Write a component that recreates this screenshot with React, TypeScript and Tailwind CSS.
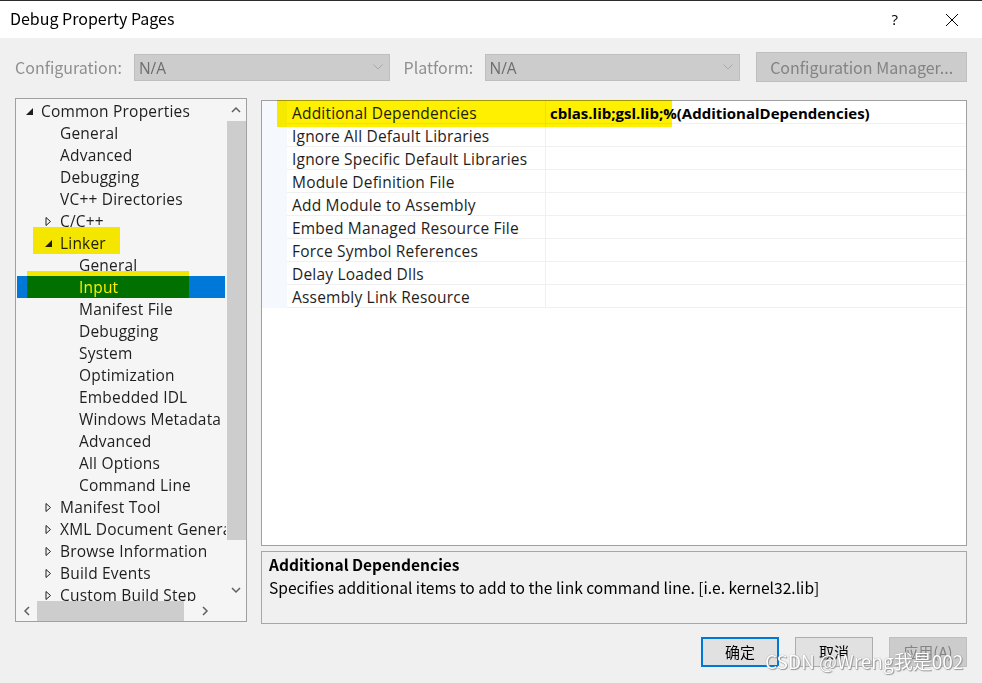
import React from "react";

const seg = "font-['Open_Sans','Noto_Sans',sans-serif]";
const yh = "font-['Noto_Sans_CJK_SC','Noto_Sans',sans-serif]";

type Node = { label: string; level: number; exp?: "open" | "closed"; selected?: boolean };

const tree: Node[] = [
  { label: "Common Properties", level: 0, exp: "open" },
  { label: "General", level: 1 },
  { label: "Advanced", level: 1 },
  { label: "Debugging", level: 1 },
  { label: "VC++ Directories", level: 1 },
  { label: "C/C++", level: 1, exp: "closed" },
  { label: "Linker", level: 1, exp: "open" },
  { label: "General", level: 2 },
  { label: "Input", level: 2, selected: true },
  { label: "Manifest File", level: 2 },
  { label: "Debugging", level: 2 },
  { label: "System", level: 2 },
  { label: "Optimization", level: 2 },
  { label: "Embedded IDL", level: 2 },
  { label: "Windows Metadata", level: 2 },
  { label: "Advanced", level: 2 },
  { label: "All Options", level: 2 },
  { label: "Command Line", level: 2 },
  { label: "Manifest Tool", level: 1, exp: "closed" },
  { label: "XML Document Generator", level: 1, exp: "closed" },
  { label: "Browse Information", level: 1, exp: "closed" },
  { label: "Build Events", level: 1, exp: "closed" },
  { label: "Custom Build Step", level: 1, exp: "closed" },
];

const props = [
  "Additional Dependencies",
  "Ignore All Default Libraries",
  "Ignore Specific Default Libraries",
  "Module Definition File",
  "Add Module to Assembly",
  "Embed Managed Resource File",
  "Force Symbol References",
  "Delay Loaded Dlls",
  "Assembly Link Resource",
];

function Expander({ exp }: { exp?: "open" | "closed" }) {
  return (
    <svg width="16" height="22" viewBox="0 0 16 22" className="shrink-0">
      {exp === "open" && <polygon points="8,8 8,15 1,15" fill="#1e1e1e" />}
      {exp === "closed" && (
        <polygon points="2,7.5 2,15.5 6.5,11.5" fill="none" stroke="#1e1e1e" strokeWidth="1" />
      )}
    </svg>
  );
}

function Chevron({ dir, color = "#606060" }: { dir: "up" | "down" | "left" | "right"; color?: string }) {
  const pts = {
    up: "1,6 5,2 9,6",
    down: "1,2 5,6 9,2",
    left: "6,1 2,5 6,9",
    right: "2,1 6,5 2,9",
  }[dir];
  const vb = dir === "up" || dir === "down" ? "0 0 10 8" : "0 0 8 10";
  const w = dir === "up" || dir === "down" ? 10 : 8;
  const h = dir === "up" || dir === "down" ? 8 : 10;
  return (
    <svg width={w} height={h} viewBox={vb}>
      <polyline points={pts} fill="none" stroke={color} strokeWidth="1.5" />
    </svg>
  );
}

function Combo() {
  return (
    <div className="w-[256px] h-[27px] bg-[#cccccc] border border-[#bfbfbf] flex items-center justify-between pl-[4px] pr-[6px]">
      <span className={`${seg} text-[15.5px] text-[#6d6d6d] pt-[3px]`}>N/A</span>
      <svg width="10" height="6" viewBox="0 0 10 6">
        <polyline points="0.5,0.5 5,5 9.5,0.5" fill="none" stroke="#a8a8a8" strokeWidth="1" />
      </svg>
    </div>
  );
}

export default function App() {
  return (
    <div className="w-[982px] h-[683px] bg-[#f0f0f0] relative overflow-hidden text-[#1e1e1e]">
      {/* title bar */}
      <div className="h-[38px] bg-white flex items-center border-t border-[#2b2b2b]">
        <span className={`${yh} text-[16px] text-black ml-[10px] pb-[3px]`}>Debug Property Pages</span>
        <span className={`${seg} text-[15px] text-black ml-auto mr-[47px]`}>?</span>
        <svg width="14" height="14" viewBox="0 0 14 14" className="mr-[23px]">
          <path d="M1 1 L13 13 M13 1 L1 13" stroke="#000" strokeWidth="1" />
        </svg>
      </div>

      <div className="px-[15px]">
        {/* configuration row */}
        <div className="mt-[14px] h-[30px] flex items-center">
          <span className={`${yh} w-[119px] text-[16px] text-[#8f8f8f]`}>Configuration:</span>
          <Combo />
          <span className={`${yh} ml-[14px] w-[81px] text-[16px] text-[#8f8f8f]`}>Platform:</span>
          <Combo />
          <div className={`${yh} ml-[16px] w-[211px] h-[30px] bg-[#cccccc] border border-[#bfbfbf] flex items-center justify-center text-[16px] text-[#838383]`}>
            Configuration Manager...
          </div>
        </div>

        {/* main */}
        <div className="mt-[16px] flex h-[526px]">
          {/* tree */}
          <div className="w-[232px] h-[524px] border border-[#a0a0a0] bg-[#f5f5f5] flex flex-col">
            <div className="flex flex-1 min-h-0">
              <div className="w-[210px] overflow-hidden pt-[1px] relative">
                {tree.map((n, i) => (
                  <div
                    key={i}
                    className={`h-[22px] flex items-center whitespace-nowrap mx-[1px] ${n.selected ? "bg-[#0078d7] text-white" : ""}`}
                    style={{ paddingLeft: 8 + n.level * 19 }}
                  >
                    <Expander exp={n.exp} />
                    <span className={`${seg} text-[15.5px] tracking-[0.2px] pt-[2px]`}>{n.label}</span>
                  </div>
                ))}
                {/* highlighter marks */}
                <div className="absolute left-[17px] top-[128px] w-[87px] h-[27px] bg-[#fff000] mix-blend-multiply" />
                <div className="absolute left-[11px] top-[172px] w-[162px] h-[27px] bg-[#fff000] mix-blend-multiply" />
              </div>
              <div className="w-[20px] flex flex-col items-center">
                <div className="h-[22px] flex items-center justify-center">
                  <Chevron dir="up" />
                </div>
                <div className="w-[19px] h-[419px] bg-[#cdcdcd]" />
                <div className="flex-1" />
                <div className="h-[22px] flex items-center justify-center">
                  <Chevron dir="down" />
                </div>
              </div>
            </div>
            <div className="h-[20px] flex items-center">
              <div className="w-[21px] flex justify-center">
                <Chevron dir="left" />
              </div>
              <div className="w-[147px] h-[20px] bg-[#cdcdcd]" />
              <div className="flex-1 flex justify-center">
                <Chevron dir="right" />
              </div>
              <div className="w-[20px]" />
            </div>
          </div>

          {/* right side */}
          <div className="ml-[14px] w-[707px] flex flex-col">
            <div className="mt-[2px] h-[446px] border border-[#a0a0a0] bg-white relative">
              {props.map((p, i) => (
                <div key={i} className="flex h-[23px]">
                  <div className="w-[25px] bg-[#f5f8fc]" />
                  <div className="w-[259px] border-b border-r border-[#f0f0f0] flex items-center pl-[5px] pt-[3px]">
                    <span className={`${seg} text-[15.5px] tracking-[0.2px] whitespace-nowrap`}>{p}</span>
                  </div>
                  <div className="flex-1 border-b border-[#f0f0f0] flex items-center pl-[4px] pt-[2px]">
                    {i === 0 && (
                      <span className={`${seg} text-[15px] font-bold text-black whitespace-nowrap`}>
                        cblas.lib;gsl.lib;%(AdditionalDependencies)
                      </span>
                    )}
                  </div>
                </div>
              ))}
              <div className="absolute left-[15px] top-[-1px] w-[395px] h-[27px] bg-[#fff000] mix-blend-multiply" />
            </div>
            <div className="mt-[5px] h-[73px] border border-[#a7a7a7] bg-[#f0f0f0] px-[7px] pt-[1px]">
              <div className={`${yh} text-[15.5px] font-bold text-black leading-[23px]`}>Additional Dependencies</div>
              <div className={`${yh} text-[15.6px] text-black leading-[23px]`}>
                Specifies additional items to add to the link command line. [i.e. kernel32.lib]
              </div>
            </div>
          </div>
        </div>

        {/* buttons */}
        <div className="mt-[13px] flex justify-end gap-[16px]">
          <div className={`${yh} w-[78px] h-[30px] border-2 border-[#0078d7] bg-[#e1e1e1] flex items-center justify-center text-[15px] text-black`}>
            确定
          </div>
          <div className={`${yh} w-[78px] h-[30px] border border-[#adadad] bg-[#e1e1e1] flex items-center justify-center text-[15px] text-black`}>
            取消
          </div>
          <div className={`${yh} w-[78px] h-[30px] border border-[#bfbfbf] bg-[#cccccc] flex items-center justify-center text-[15px] text-[#838383]`}>
            应用(A)
          </div>
        </div>
      </div>

      {/* watermark */}
      <div
        className={`${yh} absolute left-[765px] top-[647px] text-[19px] text-white whitespace-nowrap [text-shadow:0_0_1px_#777,1px_1px_1px_#999]`}
      >
        CSDN @Wreng我是002
      </div>
    </div>
  );
}
